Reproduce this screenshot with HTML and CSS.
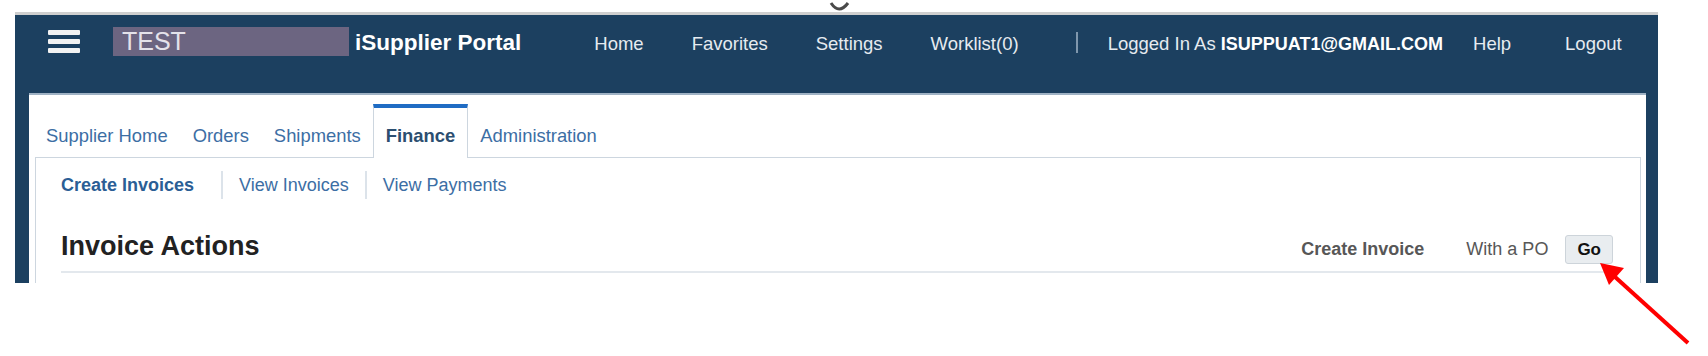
FILE: index.html
```html
<!DOCTYPE html>
<html>
<head>
  <meta charset="utf-8" />
  <title>iSupplier Portal - Finance</title>
  <meta name="viewport" content="width=device-width, initial-scale=1">
  <link rel="stylesheet" href="styles.css">
</head>
<body>
  <div class="screen">
    <div class="topbar">
      <span class="burger"><i></i><i></i><i></i></span>
      <span class="env">TEST</span>
      <span class="brand">iSupplier Portal</span>
      <div class="global-nav">
        <a href="#">Home</a>
        <a href="#">Favorites</a>
        <a href="#">Settings</a>
        <a href="#">Worklist(0)</a>
      </div>
      <span class="bar-divider"></span>
      <span class="user">Logged In As <b>ISUPPUAT1@GMAIL.COM</b></span>
      <a class="help" href="#">Help</a>
      <a class="logout" href="#">Logout</a>
    </div>

    <div class="panel">
      <ul class="tabs">
        <li><a href="#">Supplier Home</a></li>
        <li><a href="#">Orders</a></li>
        <li><a href="#">Shipments</a></li>
        <li class="active"><a href="#">Finance</a></li>
        <li><a href="#">Administration</a></li>
      </ul>
      <div class="subpanel">
        <ul class="subtabs">
          <li class="current"><a href="#">Create Invoices</a></li>
          <li><a href="#">View Invoices</a></li>
          <li><a href="#">View Payments</a></li>
        </ul>
        <div class="section-head">
          <h2>Invoice Actions</h2>
          <div class="actions">
            <span class="action-label">Create Invoice</span>
            <span class="action-type">With a PO</span>
            <button class="go">Go</button>
          </div>
        </div>
      </div>
    </div>
  </div>

  <!-- annotation drawn over the screenshot -->
  <svg class="overlay" width="1708" height="356" viewBox="0 0 1708 356">
    <path d="M831 3 Q839 15 848 3" fill="none" stroke="#4a4a4a" stroke-width="3" />
    <line x1="1688" y1="343" x2="1614" y2="276" stroke="#ff0000" stroke-width="4" />
    <polygon points="1600,263 1624,268 1609,285" fill="#ff0000" />
  </svg>
</body>
</html>
```

FILE: styles.css
```css
body {
  margin: 0;
  background: #fff;
  font-family: "Liberation Sans", Arial, sans-serif;
}

a {
  text-decoration: none;
  color: inherit;
}

ul {
  list-style: none;
  margin: 0;
  padding: 0;
}

.screen {
  box-sizing: border-box;
  width: 1643px;
  height: 271px;
  margin: 12px 0 0 15px;
  border-top: 3px solid #cfcfcf;
  background: #1c4060;
  display: flex;
  flex-direction: column;
  overflow: hidden;
}

/* top navy bar */
.topbar {
  display: flex;
  align-items: center;
  height: 29px;
  padding: 12px 0 37px 33px;
  color: #e6ebf0;
  font-size: 18.5px;
}

.burger {
  display: flex;
  flex-direction: column;
  gap: 4px;
  width: 32px;
}

.burger i {
  display: block;
  height: 5px;
  background: #f2f2f2;
  border-radius: 1px;
}

.env {
  width: 236px;
  height: 29px;
  margin-left: 33px;
  padding-left: 9px;
  box-sizing: border-box;
  background: #6c6581;
  color: #e4e2ea;
  font-size: 25px;
  line-height: 29px;
}

.brand {
  margin-left: 6px;
  margin-top: 2px;
  font-size: 22.5px;
  font-weight: bold;
  color: #fff;
}

.global-nav,
.user,
.help,
.logout {
  margin-top: 4px;
}

.global-nav {
  display: flex;
  gap: 48px;
  margin-left: 73px;
}

.bar-divider {
  width: 2px;
  height: 21px;
  margin-left: 57px;
  margin-top: 2px;
  background: #7f97ad;
}

.user {
  margin-left: 30px;
}

.user b {
  font-size: 18px;
  color: #fff;
}

.help {
  margin-left: 30px;
}

.logout {
  margin-left: 54px;
}

/* white content area */
.panel {
  flex: 1;
  display: flex;
  flex-direction: column;
  margin: 0 12px 0 14px;
  border-top: 2px solid #9fb2c4;
  background: #fff;
}

.tabs {
  display: flex;
  padding: 9px 0 0 4.5px;
}

.tabs li {
  position: relative;
  margin-bottom: -1px;
  padding: 18px 11.5px 12px;
  border: 1px solid transparent;
  border-top: 4px solid transparent;
  border-bottom: none;
  font-size: 18.4px;
  line-height: 20px;
  color: #3c6ea4;
}

.tabs li.active {
  border-color: #cdd6df;
  border-top-color: #1f6cc4;
  background: #fff;
  color: #2b4e70;
  font-weight: bold;
}

.subpanel {
  flex: 1;
  margin: 0 5px 0 6px;
  border: 1px solid #cdd6df;
  border-bottom: none;
}

.subtabs {
  display: flex;
  padding-top: 13px;
}

.subtabs li {
  height: 28px;
  padding: 0 16px;
  border-left: 2px solid #dce3ea;
  display: flex;
  align-items: center;
  font-size: 18px;
  color: #3c6ea4;
}

.subtabs li.current {
  padding: 0 27px 0 25px;
  border-left: none;
  font-weight: bold;
  color: #2b5e95;
}

.section-head {
  display: flex;
  align-items: baseline;
  margin: 32px 27px 0 25px;
  padding-bottom: 7px;
  border-bottom: 2px solid #e3e8ed;
}

.section-head h2 {
  margin: 0;
  font-size: 27px;
  line-height: 30px;
  color: #222;
}

.actions {
  display: flex;
  align-items: baseline;
  margin-left: auto;
  color: #575757;
}

.action-label {
  font-size: 18px;
  font-weight: bold;
  margin-right: 42px;
}

.action-type {
  font-size: 18px;
  margin-right: 17px;
}

.go {
  padding: 5px 11px;
  border: 1px solid #cdd4da;
  border-radius: 3px;
  background: #e9edf0;
  font-family: inherit;
  font-size: 17px;
  line-height: 17px;
  font-weight: bold;
  color: #111;
}

.overlay {
  position: absolute;
  left: 0;
  top: 0;
  pointer-events: none;
}
```
